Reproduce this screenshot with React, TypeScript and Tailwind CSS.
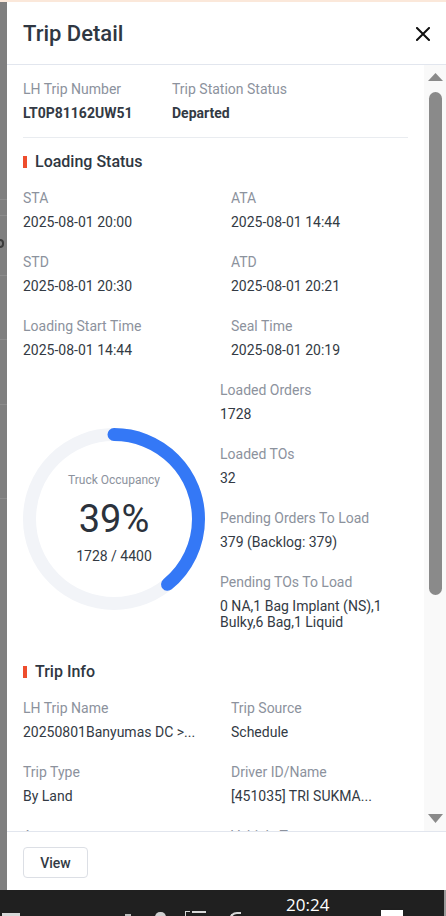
import React, { ReactNode } from "react";

interface fieldProps {
  label: string;
  children: ReactNode;
  bold?: boolean;
}

export function Field({ label, children, bold }: fieldProps) {
  return (
    <div className="flex min-w-0 flex-col">
      <p className="text-sm leading-4 text-[#8c929d]">{label}</p>
      <p
        className={`mt-2 text-sm leading-4 text-[#333a44] ${bold ? "font-bold" : ""}`}
      >
        {children}
      </p>
    </div>
  );
}

export function SectionTitle({ title }: { title: string }) {
  return (
    <div className="flex h-6 items-center gap-2">
      <span className="h-3 w-1 bg-[#ee4d2d]" />
      <h3 className="text-base font-medium leading-6 text-[#2f3742]">
        {title}
      </h3>
    </div>
  );
}

export function Donut({ percent }: { percent: number }) {
  const radius = 84.5;
  const length = 2 * Math.PI * radius;
  return (
    <div className="grid h-[182px] w-[182px] place-items-center">
      <svg
        width="182"
        height="182"
        viewBox="0 0 182 182"
        className="[grid-area:1/1]"
      >
        <circle
          cx="91"
          cy="91"
          r={radius}
          fill="none"
          stroke="#f2f4f8"
          strokeWidth="13"
        />
        <circle
          cx="91"
          cy="91"
          r={radius}
          fill="none"
          stroke="#3478f6"
          strokeWidth="13"
          strokeLinecap="round"
          strokeDasharray={`${length * percent} ${length}`}
          transform="rotate(-90 91 91)"
        />
      </svg>
      <div className="flex flex-col items-center [grid-area:1/1]">
        <p className="text-xs leading-4 text-[#8c929d]">Truck Occupancy</p>
        <p className="mt-3 text-[38px] leading-[38px] text-[#2b323c]">39%</p>
        <p className="mt-2 text-sm leading-5 text-[#333a44]">1728 / 4400</p>
      </div>
    </div>
  );
}

function Scrollbar() {
  return (
    <div className="flex w-[22px] flex-col items-center bg-[#f9f9f9] py-2">
      <svg width="15" height="8" viewBox="0 0 15 8">
        <path d="M7.5 0 L15 8 L0 8 Z" fill="#8a8a8a" />
      </svg>
      <div className="mt-[11px] h-[503px] w-[13px] rounded-full bg-[#8a8a8a]" />
      <div className="flex-1" />
      <svg width="15" height="9" viewBox="0 0 15 9">
        <path d="M0 0 L15 0 L7.5 9 Z" fill="#8a8a8a" />
      </svg>
    </div>
  );
}

function Backdrop() {
  return (
    <div className="flex w-[7px] flex-col bg-[#7f7f7f]">
      <div className="h-[197px]" />
      <div className="h-px bg-[#8c8c8c]" />
      <div className="h-[15px]" />
      <div className="h-px bg-[#8c8c8c]" />
      <div className="h-[23px]" />
      <div className="h-[9px] w-[4px] rounded-r-full border-2 border-l-0 border-[#3a3a3a]" />
      <div className="h-[27px]" />
      <div className="h-px bg-[#8c8c8c]" />
      <div className="h-[63px]" />
      <div className="h-px bg-[#8c8c8c]" />
      <div className="h-[64px]" />
      <div className="h-px bg-[#8c8c8c]" />
      <div className="h-[93px]" />
      <div className="h-px bg-[#8c8c8c]" />
    </div>
  );
}

function Taskbar() {
  return (
    <div className="flex h-[26px] items-start bg-[#202020]">
      <div className="ml-[2px] mt-[23px] h-[3px] w-[18px] bg-[#d8d8d8]" />
      <div className="ml-[105px] mt-[24px] h-[2px] w-[6px] bg-[#bdbdbd]" />
      <div className="ml-[24px] mt-[22px] h-[10px] w-[11px] rounded-full bg-[#cfcfcf]" />
      <div className="ml-[19px] mt-[21px] flex gap-[2px]">
        <div className="h-[5px] w-[5px] border-l border-t border-[#d8d8d8]" />
        <div className="h-[5px] w-[14px] border-t-2 border-[#d8d8d8]" />
      </div>
      <div className="ml-[23px] mt-[22px] h-[8px] w-[12px] rounded-tl-full border-l-2 border-t-2 border-[#d8d8d8]" />
      <p className="ml-[45px] pt-[5px] font-['Segoe_UI','Open_Sans',sans-serif] text-[17px] leading-5 text-white">
        20:24
      </p>
      <div className="ml-[52px] mt-[18px] h-[8px] w-[22px] border-t-2 border-[#1f1f1f] bg-white" />
      <div className="ml-auto h-[26px] w-[2px] bg-[#9a9a9a]" />
    </div>
  );
}

export default function App() {
  return (
    <div className="flex h-[916px] w-[446px] flex-col overflow-hidden bg-[#7f7f7f] font-['Roboto',sans-serif]">
      <div className="h-[2px] bg-[#fbe8da]" />
      <div className="flex min-h-0 flex-1">
        <Backdrop />
        <div className="flex min-w-0 flex-1 flex-col bg-white">
          <div className="flex h-[63px] items-center justify-between border-b border-[#e2e6ee] px-4">
            <h2 className="text-[22px] font-medium text-[#2f3742]">
              Trip Detail
            </h2>
            <button type="button" className="mt-[2px]">
              <svg width="14" height="14" viewBox="0 0 14 14">
                <path
                  d="M1 1 L13 13 M13 1 L1 13"
                  stroke="#111"
                  strokeWidth="2"
                  strokeLinecap="square"
                />
              </svg>
            </button>
          </div>

          <div className="flex min-h-0 flex-1">
            <div className="min-w-0 flex-1 overflow-hidden px-4 pt-4">
              <div className="flex border-b border-[#e9ecf0] pb-4">
                <div className="w-[149px]">
                  <Field label="LH Trip Number" bold>
                    LT0P81162UW51
                  </Field>
                </div>
                <Field label="Trip Station Status" bold>
                  Departed
                </Field>
              </div>

              <div className="mt-3">
                <SectionTitle title="Loading Status" />
              </div>
              <div className="mt-4 grid grid-cols-[208px_1fr] gap-y-6">
                <Field label="STA">2025-08-01 20:00</Field>
                <Field label="ATA">2025-08-01 14:44</Field>
                <Field label="STD">2025-08-01 20:30</Field>
                <Field label="ATD">2025-08-01 20:21</Field>
                <Field label="Loading Start Time">2025-08-01 14:44</Field>
                <Field label="Seal Time">2025-08-01 20:19</Field>
              </div>

              <div className="mt-6 flex">
                <div className="mt-[46px] w-[181px]">
                  <Donut percent={0.39} />
                </div>
                <div className="ml-4 flex flex-1 flex-col gap-6">
                  <Field label="Loaded Orders">1728</Field>
                  <Field label="Loaded TOs">32</Field>
                  <Field label="Pending Orders To Load">379 (Backlog: 379)</Field>
                  <Field label="Pending TOs To Load">
                    0 NA,1 Bag Implant (NS),1
                    <br />
                    Bulky,6 Bag,1 Liquid
                  </Field>
                </div>
              </div>

              <div className="mt-[30px]">
                <SectionTitle title="Trip Info" />
              </div>
              <div className="mt-4 grid grid-cols-[208px_1fr] gap-y-6">
                <Field label="LH Trip Name">20250801Banyumas DC &gt;...</Field>
                <Field label="Trip Source">Schedule</Field>
                <Field label="Trip Type">By Land</Field>
                <Field label="Driver ID/Name">[451035] TRI SUKMA...</Field>
                <Field label="Agency">-</Field>
                <Field label="Vehicle Type">Truck</Field>
              </div>
            </div>
            <Scrollbar />
          </div>

          <div className="h-[59px] border-t border-[#e2e6ee] px-4 pt-[15px]">
            <button
              type="button"
              className="h-[31px] w-[65px] rounded border border-[#dcdfe5] text-sm font-medium text-[#333a44]"
            >
              View
            </button>
          </div>
        </div>
      </div>
      <Taskbar />
    </div>
  );
}
